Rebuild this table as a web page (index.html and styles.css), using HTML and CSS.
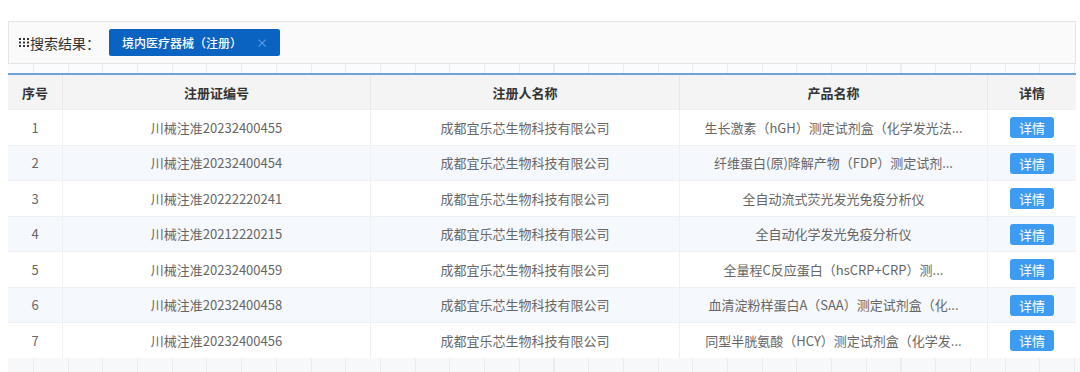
FILE: index.html
```html
<!DOCTYPE html>
<html lang="zh-CN">
<head>
    <meta charset="UTF-8">
    <meta name="viewport" content="width=device-width, initial-scale=1.0">
    <title>搜索结果</title>
    <link rel="stylesheet" href="styles.css">
</head>
<body>
    <div class="page">
        <div class="search-bar">
            <span class="search-label">
                <svg class="grid-icon" width="10" height="9" viewBox="0 0 10 9">
                    <rect x="0" y="0" width="2" height="2"/><rect x="4" y="0" width="2" height="2"/><rect x="8" y="0" width="2" height="2"/>
                    <rect x="0" y="3.5" width="2" height="2"/><rect x="4" y="3.5" width="2" height="2"/><rect x="8" y="3.5" width="2" height="2"/>
                    <rect x="0" y="7" width="2" height="2"/><rect x="4" y="7" width="2" height="2"/><rect x="8" y="7" width="2" height="2"/>
                </svg>搜索结果：
            </span>
            <span class="tag">境内医疗器械（注册）<span class="tag-close">×</span></span>
        </div>
        <div class="grid-strip"></div>
        <table class="result-table">
            <thead>
                <tr>
                    <th class="col-no">序号</th>
                    <th class="col-code">注册证编号</th>
                    <th class="col-owner">注册人名称</th>
                    <th class="col-name">产品名称</th>
                    <th class="col-detail">详情</th>
                </tr>
            </thead>
            <tbody>
                <tr><td>1</td><td>川械注准20232400455</td><td>成都宜乐芯生物科技有限公司</td><td>生长激素（hGH）测定试剂盒（化学发光法...</td><td><button class="btn-detail">详情</button></td></tr>
                <tr><td>2</td><td>川械注准20232400454</td><td>成都宜乐芯生物科技有限公司</td><td>纤维蛋白(原)降解产物（FDP）测定试剂...</td><td><button class="btn-detail">详情</button></td></tr>
                <tr><td>3</td><td>川械注准20222220241</td><td>成都宜乐芯生物科技有限公司</td><td>全自动流式荧光发光免疫分析仪</td><td><button class="btn-detail">详情</button></td></tr>
                <tr><td>4</td><td>川械注准20212220215</td><td>成都宜乐芯生物科技有限公司</td><td>全自动化学发光免疫分析仪</td><td><button class="btn-detail">详情</button></td></tr>
                <tr><td>5</td><td>川械注准20232400459</td><td>成都宜乐芯生物科技有限公司</td><td>全量程C反应蛋白（hsCRP+CRP）测...</td><td><button class="btn-detail">详情</button></td></tr>
                <tr><td>6</td><td>川械注准20232400458</td><td>成都宜乐芯生物科技有限公司</td><td>血清淀粉样蛋白A（SAA）测定试剂盒（化...</td><td><button class="btn-detail">详情</button></td></tr>
                <tr><td>7</td><td>川械注准20232400456</td><td>成都宜乐芯生物科技有限公司</td><td>同型半胱氨酸（HCY）测定试剂盒（化学发...</td><td><button class="btn-detail">详情</button></td></tr>
            </tbody>
        </table>
        <div class="grid-strip grid-strip-bottom"></div>
    </div>
</body>
</html>
```

FILE: styles.css
```css
body {
    margin: 0;
    background: #fff;
    font-family: "Noto Sans CJK SC", "Open Sans", sans-serif;
    font-size: 13px;
    color: #666;
}
.page {
    padding: 21px 4px 0 8px;
}
.search-bar {
    display: flex;
    align-items: center;
    height: 41px;
    padding-left: 10px;
    border: 1px solid #e4e4e4;
    background: #fafafa;
}
.search-label {
    display: flex;
    align-items: center;
    color: #333;
    font-size: 14px;
    margin-right: 9px;
}
.grid-icon {
    fill: #333;
    margin-right: 1px;
}
.tag {
    display: flex;
    align-items: center;
    height: 27px;
    padding: 0 12px 0 13px;
    background: #0b63c1;
    color: #fff;
    font-size: 12px;
    font-weight: 500;
    border-radius: 2px;
}
.tag-close {
    margin-left: 14px;
    color: #5f9be0;
    font-size: 12px;
}
.grid-strip {
    height: 9px;
    margin-right: -4px;
    background-color: #fbfcfd;
    background-image: repeating-linear-gradient(to right, #e9ecf0 0 1px, transparent 1px 34.7px);
    background-position: 25px 0;
}
.grid-strip-bottom {
    height: 20px;
    background-color: #f6f8fa;
}
.result-table {
    width: 1068px;
    border-collapse: collapse;
    table-layout: fixed;
    border-top: 2px solid #6ea3d9;
}
.result-table th {
    height: 34px;
    padding: 0;
    background: #f4f4f4;
    color: #333;
    font-weight: bold;
    font-size: 13px;
    border-left: 1px solid #e8e8e8;
}
.result-table td {
    height: 34.5px;
    padding: 0;
    text-align: center;
    border-left: 1px solid #eef0f3;
    border-top: 1px solid #eef0f3;
    white-space: nowrap;
    overflow: hidden;
}
.result-table th:first-child,
.result-table td:first-child {
    border-left: none;
}
.result-table tbody tr:nth-child(even) {
    background: #f5f8fc;
}
.col-no { width: 54px; }
.col-code { width: 307px; }
.col-owner { width: 308px; }
.col-name { width: 307px; }
.col-detail { width: auto; }
.btn-detail {
    width: 44px;
    height: 21px;
    padding: 0;
    border: none;
    border-radius: 3px;
    background: #3d9cf2;
    color: #fff;
    font-family: "Noto Sans CJK SC", sans-serif;
    font-size: 13px;
    line-height: 21px;
    vertical-align: middle;
    cursor: pointer;
}
```
